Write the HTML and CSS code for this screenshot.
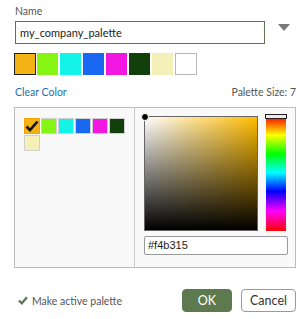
FILE: index.html
```html
<!DOCTYPE html>
<html>
<head>
<meta charset="utf-8">
<link rel="stylesheet" href="styles.css">
</head>
<body>
<div class="dialog">
  <div class="label">Name</div>
  <div class="name-row">
    <div class="name-input">my_company_palette</div>
    <svg class="caret" width="12" height="7" viewBox="0 0 12 7"><path d="M0 0H12L6 7Z" fill="#7a7a7a"/></svg>
  </div>
  <div class="swatches">
    <span class="sw sel" style="background:#f4b315"></span>
    <span class="sw" style="background:#87f514"></span>
    <span class="sw" style="background:#14f3e8"></span>
    <span class="sw" style="background:#1a68f2"></span>
    <span class="sw" style="background:#f116e0"></span>
    <span class="sw" style="background:#12400b"></span>
    <span class="sw" style="background:#f4f0b8"></span>
    <span class="sw empty"></span>
  </div>
  <div class="meta">
    <a class="clear">Clear Color</a>
    <span class="size">Palette Size: 7</span>
  </div>
  <div class="panel">
    <div class="pal">
      <span class="ps cur" style="background:#f4b315"><svg width="14" height="13" viewBox="0 0 14 13"><path d="M1.5 6.5L5 10L12.5 1.5" fill="none" stroke="#111" stroke-width="2.6"/></svg></span>
      <span class="ps" style="background:#87f514"></span>
      <span class="ps" style="background:#14f3e8"></span>
      <span class="ps" style="background:#1a68f2"></span>
      <span class="ps" style="background:#f116e0"></span>
      <span class="ps" style="background:#12400b"></span>
      <span class="ps" style="background:#f4f0b8"></span>
    </div>
    <div class="picker">
      <div class="pick-row">
        <div class="sv"><span class="dot"></span></div>
        <div class="hue"><span class="hue-handle"></span></div>
      </div>
      <div class="hex">#f4b315</div>
    </div>
  </div>
  <div class="footer">
    <div class="active">
      <svg width="10" height="9" viewBox="0 0 10 9"><path d="M1 4.5L3.8 7.3L9 1.2" fill="none" stroke="#5a7450" stroke-width="2.2"/></svg>
      <span>Make active palette</span>
    </div>
    <div class="buttons">
      <button class="btn ok">OK</button>
      <button class="btn cancel">Cancel</button>
    </div>
  </div>
</div>
</body>
</html>
```
FILE: styles.css
```css
html, body {
  margin: 0;
  padding: 0;
  background: #fff;
}
.dialog {
  width: 304px;
  height: 319px;
  box-sizing: border-box;
  padding: 4px 8px 0 14px;
  font-family: Lato, "Open Sans", sans-serif;
  font-size: 10.5px;
  color: #555;
}
.label {
  line-height: 15px;
  padding-left: 1px;
}
.name-row {
  display: flex;
  align-items: flex-start;
  margin-top: 2px;
}
.name-input {
  box-sizing: border-box;
  width: 250px;
  height: 23px;
  margin-left: 1px;
  border: 1px solid #5f7551;
  padding: 0 4px;
  font-size: 11px;
  line-height: 21px;
  color: #222;
}
.caret {
  margin-left: 13px;
  margin-top: 3px;
}
.swatches {
  display: flex;
  gap: 2px;
  margin-top: 9px;
}
.sw {
  width: 21px;
  height: 22px;
  box-sizing: border-box;
}
.sw.sel {
  border: 1px solid #222;
  width: 22px;
  margin-right: -1px;
}
.sw.empty {
  border: 1px solid #b8b8b8;
  background: #fff;
  width: 22px;
}
.meta {
  display: flex;
  justify-content: space-between;
  align-items: center;
  margin-top: 9px;
  padding-left: 1px;
  line-height: 16px;
}
.clear {
  color: #1e6fa6;
}
.size {
  color: #555;
}
.panel {
  margin-top: 7px;
  width: 282px;
  height: 161px;
  box-sizing: border-box;
  border: 1px solid #bdbdbd;
  background: #f9f9f9;
  display: grid;
  grid-template-columns: 119px 1fr;
}
.pal {
  display: flex;
  flex-wrap: wrap;
  align-content: flex-start;
  gap: 1px;
  padding: 10px 0 0 9px;
}
.ps {
  width: 16px;
  height: 16px;
  box-sizing: border-box;
  border: 1px solid #cfcfcf;
  display: flex;
  align-items: center;
  justify-content: center;
}
.ps.cur {
  border-color: #f4a300;
}
.picker {
  border-left: 1px solid #c8c8c8;
  padding: 6px 0 0 9px;
}
.pick-row {
  display: flex;
  align-items: flex-start;
  gap: 7px;
}
.sv {
  position: relative;
  width: 114px;
  height: 115px;
  margin-top: 2px;
  box-sizing: border-box;
  border: 1px solid #666;
  background:
    linear-gradient(to bottom, rgba(0,0,0,0), #000),
    linear-gradient(to right, #fff, #ffbc00);
}
.dot {
  position: absolute;
  left: -4px;
  top: -4px;
  width: 6px;
  height: 6px;
  border-radius: 50%;
  background: #000;
  border: 1px solid #fff;
}
.hue {
  position: relative;
  width: 20px;
  height: 117px;
  margin-left: 1px;
  background: linear-gradient(to bottom, #f00 2%, #ff0 18%, #0f0 34%, #0ff 50%, #00f 66%, #f0f 83%, #f00 100%);
}
.hue-handle {
  position: absolute;
  left: -1px;
  top: 0;
  width: 20px;
  height: 3px;
  border: 1px solid #222;
  background: #f6e6e6;
}
.hex {
  margin-top: 5px;
  width: 144px;
  height: 19px;
  box-sizing: border-box;
  border: 1px solid #9a9a9a;
  border-radius: 2px;
  background: #fff;
  padding: 0 3px;
  font-family: "Liberation Sans", Arial, sans-serif;
  font-size: 11px;
  line-height: 17px;
  color: #222;
}
.footer {
  display: flex;
  justify-content: space-between;
  align-items: center;
  margin-top: 21px;
  padding-left: 4px;
}
.active {
  display: flex;
  align-items: center;
  gap: 4px;
}
.buttons {
  display: flex;
  gap: 9px;
}
.btn {
  height: 23px;
  border-radius: 4px;
  font-family: Lato, "Open Sans", sans-serif;
  font-size: 12.5px;
  padding: 0;
}
.ok {
  width: 50px;
  background: #5d7a4f;
  border: 1px solid #5d7a4f;
  color: #fff;
}
.cancel {
  width: 55px;
  background: #fff;
  border: 1px solid #9a9a9a;
  color: #333;
}
```
